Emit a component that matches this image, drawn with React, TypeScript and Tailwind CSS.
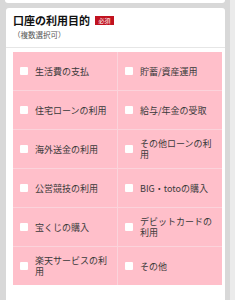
const items = [
  '生活費の支払',
  '貯蓄/資産運用',
  '住宅ローンの利用',
  '給与/年金の受取',
  '海外送金の利用',
  'その他ローンの利用',
  '公営競技の利用',
  'BIG・totoの購入',
  '宝くじの購入',
  'デビットカードの利用',
  '楽天サービスの利用',
  'その他',
];

export default function App() {
  return (
    <div className="flex min-h-[300px] bg-[#d8d8d8] font-['Noto_Sans_CJK_JP',sans-serif] text-[#333]">
      <div className="w-[230px]">
        {/* previous card */}
        <div className="ml-[5px] h-[3px] w-[220px] rounded-b-[3px] bg-white" />

        {/* purpose card */}
        <div className="ml-[6px] mt-[5px] h-[300px] w-[219px] rounded-[3px] bg-white">
          <div className="border-b border-[#e6e6e6] pl-[7px] pt-[6px] pb-[8px]">
            <div className="flex items-center gap-[5px]">
              <h2 className="text-[11px] font-bold leading-[13px] text-[#111]">口座の利用目的</h2>
              <span className="flex h-[9px] w-[19px] items-center justify-center bg-[#c1121f] text-[6px] leading-none text-white">
                必須
              </span>
            </div>
            <p className="mt-[3px] text-[7.5px] leading-[9px] text-[#555]">（複数選択可）</p>
          </div>

          <div className="ml-[7px] mt-[4px] grid w-[209px] grid-cols-2 gap-px bg-[#fbd3db]">
            {items.map((label) => (
              <label key={label} className="flex h-[38px] items-center bg-[#ffbfca] pl-[7px] pr-[8px]">
                <span className="h-[8px] w-[8px] shrink-0 rounded-[1px] bg-white" />
                <span className="ml-[7px] text-[9px] leading-[11px] text-[#3a3a3a]">{label}</span>
              </label>
            ))}
          </div>
        </div>
      </div>
      <div className="flex-1 bg-[#ebebeb]" />
    </div>
  );
}
